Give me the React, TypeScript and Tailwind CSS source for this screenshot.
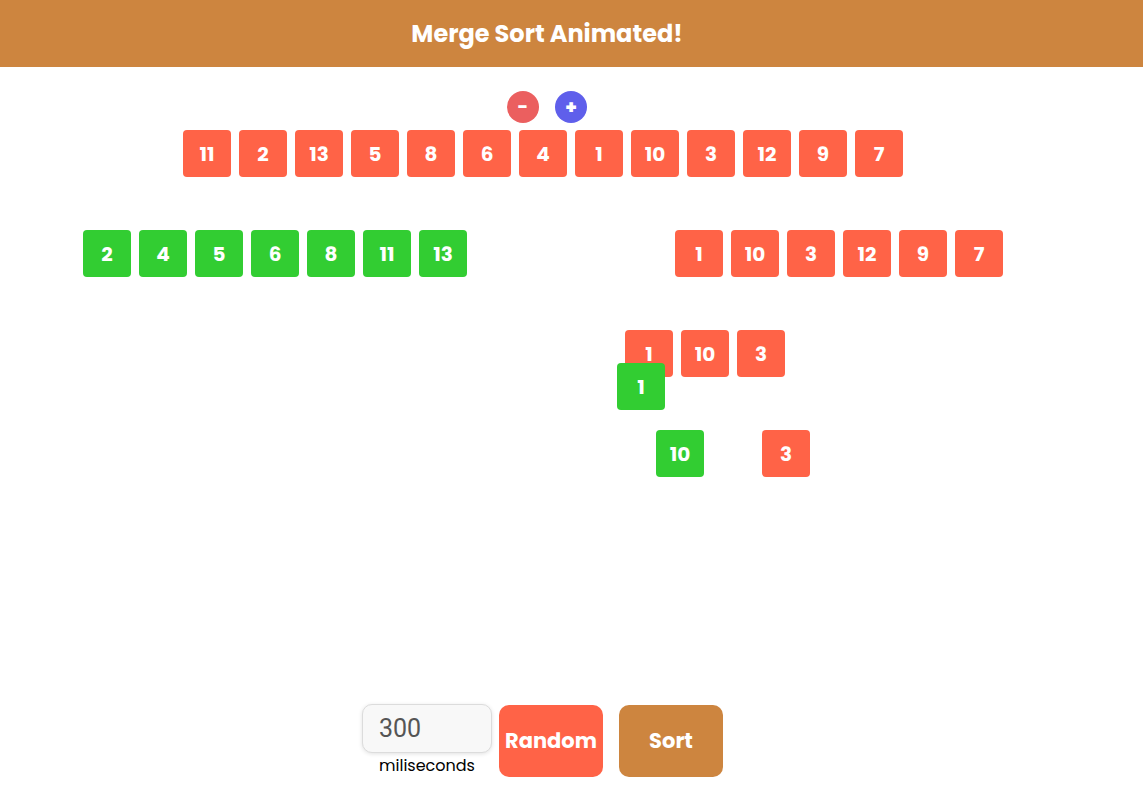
import React from 'react'

const font = { fontFamily: "Poppins, 'Inter', 'Noto Sans', sans-serif" }

function Box({ n, green = false }: { n: number; green?: boolean }) {
  return (
    <div
      className={`flex h-[47px] w-[48px] shrink-0 items-center justify-center rounded-[4px] text-[20px] font-bold text-white ${
        green ? 'bg-[#32CD32]' : 'bg-[#FF6347]'
      }`}
    >
      {n}
    </div>
  )
}

function Row({ items, green = false }: { items: number[]; green?: boolean }) {
  return (
    <div className="flex gap-2">
      {items.map((n, i) => (
        <Box key={i} n={n} green={green} />
      ))}
    </div>
  )
}

export default function App() {
  return (
    <div className="flex min-h-screen flex-col bg-white" style={font}>
      {/* Header */}
      <header className="h-[67px] bg-[#CD853F]">
        <div className="flex h-full w-[1094px] items-center justify-center">
          <h1 className="text-[24px] font-bold text-white">Merge Sort Animated!</h1>
        </div>
      </header>

      {/* Size controls */}
      <div className="mt-6 flex w-[1094px] justify-center gap-4">
        <button className="flex h-[32px] w-[32px] items-center justify-center rounded-full bg-[#EB5F5F] text-[18px] font-extrabold leading-none text-white">
          -
        </button>
        <button className="flex h-[32px] w-[32px] items-center justify-center rounded-full bg-[#5F5FEB] text-[19px] font-extrabold leading-none text-white">
          +
        </button>
      </div>

      {/* Tree */}
      <div className="mt-[7px] flex pl-[183px]">
        <Row items={[11, 2, 13, 5, 8, 6, 4, 1, 10, 3, 12, 9, 7]} />
      </div>

      <div className="mt-[53px] flex pl-[83px]">
        <Row items={[2, 4, 5, 6, 8, 11, 13]} green />
        <div className="ml-[208px]">
          <Row items={[1, 10, 3, 12, 9, 7]} />
        </div>
      </div>

      <div className="mt-[53px] flex pl-[625px]">
        <div className="relative">
          <Row items={[1, 10, 3]} />
          <div className="absolute left-[-8px] top-[33px]">
            <Box n={1} green />
          </div>
        </div>
      </div>

      <div className="mt-[53px] flex pl-[656px]">
        <Box n={10} green />
        <div className="ml-[58px]">
          <Box n={3} />
        </div>
      </div>

      {/* Bottom controls */}
      <div className="mt-auto flex items-start pb-4 pl-[362px]">
        <div className="flex flex-col items-center">
          <input
            defaultValue="300"
            className="h-[49px] w-[130px] rounded-[10px] border border-[#dcdcdc] bg-[#f8f8f8] px-4 text-[25px] text-[#555] shadow-[0_1px_4px_rgba(0,0,0,0.12)] outline-none"
            style={{ fontFamily: "Roboto, 'Liberation Sans', sans-serif" }}
          />
          <span className="mt-px text-[16px] text-black">miliseconds</span>
        </div>
        <button className="ml-[7px] mt-px h-[72px] w-[104px] rounded-[10px] bg-[#FF6347] text-[21px] font-bold text-white">
          Random
        </button>
        <button className="ml-4 mt-px h-[72px] w-[104px] rounded-[10px] bg-[#CD853F] text-[21px] font-bold text-white">
          Sort
        </button>
      </div>
    </div>
  )
}
